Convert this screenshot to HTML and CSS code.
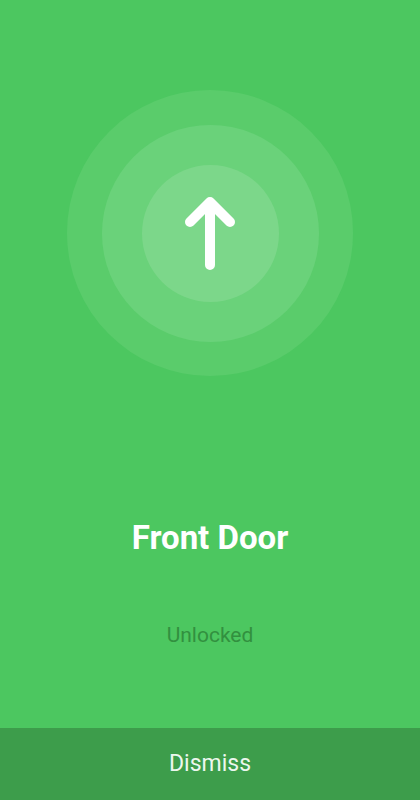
FILE: index.html
```html
<!DOCTYPE html>
<html lang="en">
<head>
<meta charset="utf-8">
<meta name="viewport" content="width=device-width, initial-scale=1">
<title>Front Door</title>
<link rel="stylesheet" href="styles.css">
</head>
<body>
<main class="screen">
  <section class="hero">
    <div class="ring ring-outer">
      <div class="ring ring-middle">
        <div class="ring ring-inner">
          <svg class="arrow" width="60" height="80" viewBox="180 193 60 80" aria-hidden="true">
            <path d="M210 203 L210 265 M190 222 L210 202 L230 222" fill="none" stroke="#ffffff" stroke-width="10" stroke-linecap="round" stroke-linejoin="round"/>
          </svg>
        </div>
      </div>
    </div>
  </section>
  <h1 class="title">Front Door</h1>
  <p class="status">Unlocked</p>
  <button class="dismiss" type="button">Dismiss</button>
</main>
</body>
</html>
```
FILE: styles.css
```css
* { box-sizing: border-box; }
html, body { margin: 0; padding: 0; }
body {
  background: #4cc760;
  font-family: Roboto, "Liberation Sans", Arial, sans-serif;
}
.screen {
  display: flex;
  flex-direction: column;
  align-items: center;
  height: 800px;
  width: 420px;
}
.hero {
  padding-top: 90px;
  display: flex;
  justify-content: center;
}
.ring {
  border-radius: 50%;
  display: flex;
  align-items: center;
  justify-content: center;
}
.ring-outer { width: 286px; height: 286px; background: #5acc6b; }
.ring-middle { width: 217px; height: 217px; background: #6ad27a; }
.ring-inner { width: 137px; height: 137px; background: #7cd78a; }
.arrow { display: block; }
.title {
  margin: 142px 0 0;
  font-size: 33px;
  line-height: 40px;
  font-weight: 700;
  color: #ffffff;
}
.status {
  margin: 65px 0 0;
  font-size: 21px;
  line-height: 25px;
  color: #32903f;
}
.dismiss {
  margin-top: auto;
  width: 100%;
  height: 72px;
  border: 0;
  padding: 0;
  background: #3d9d4b;
  color: #ecf7ee;
  font-family: Roboto, "Liberation Sans", Arial, sans-serif;
  font-size: 23px;
  line-height: 72px;
}
```
